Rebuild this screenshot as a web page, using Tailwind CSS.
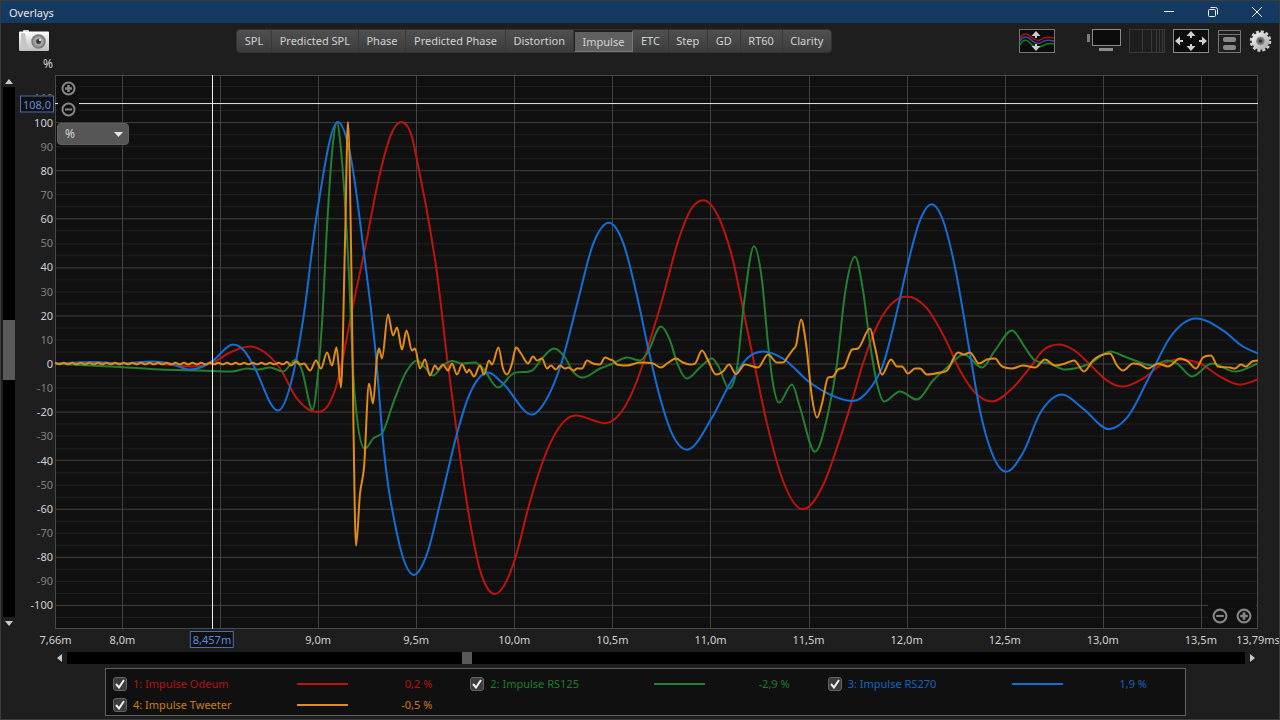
<!DOCTYPE html>
<html lang="en">
<head>
    <meta charset="UTF-8">
    <meta name="viewport" content="width=device-width, initial-scale=1.0">
    <title>Overlays</title>
    <script src="https://cdn.jsdelivr.net/npm/@tailwindcss/browser@4"></script>
</head>
<body class="h-screen flex flex-col overflow-hidden bg-[#1e1e1e] border border-[#3c3c3c] font-['Noto_Sans',sans-serif] text-[11px] leading-4 text-[#d2d2d2]">
    <!-- Title bar -->
    <header class="h-[22px] shrink-0 flex items-center bg-[#153a62] pl-2 pr-4">
        <h1 class="flex-1 pt-px text-[#e6e6e6]">Overlays</h1>
        <div class="flex items-center gap-8">
            <button aria-label="Minimize" class="w-3"><svg class="size-3" viewBox="0 0 12 12" fill="none" stroke="#f0f0f0"><path d="M1 5.5h10"/></svg></button>
            <button aria-label="Restore" class="w-3"><svg class="size-3" viewBox="0 0 12 12" fill="none" stroke="#f0f0f0"><rect x="1.5" y="3.5" width="7" height="7" rx="1"/><path d="M3.5 1.5h5a2 2 0 0 1 2 2v5"/></svg></button>
            <button aria-label="Close" class="w-3"><svg class="size-3" viewBox="0 0 12 12" fill="none" stroke="#f0f0f0"><path d="M1 1l10 10M11 1L1 11"/></svg></button>
        </div>
    </header>

    <!-- Toolbar -->
    <div class="h-[52px] shrink-0 flex items-start pt-[6px] pl-[18px] pr-[7px]">
        <button aria-label="Capture" class="w-[30px] shrink-0">
            <svg class="block w-[30px] h-6" viewBox="0 0 30 24">
                <defs>
                    <linearGradient id="body" x1="0" y1="0" x2="0" y2="1"><stop offset="0" stop-color="#fff"/><stop offset="1" stop-color="#bdbdbd"/></linearGradient>
                    <radialGradient id="lens"><stop offset="0" stop-color="#222"/><stop offset=".3" stop-color="#555"/><stop offset=".45" stop-color="#b5b5b5"/><stop offset=".85" stop-color="#777"/><stop offset="1" stop-color="#a5a5a5"/></radialGradient>
                </defs>
                <rect x="4" y="1" width="6" height="4" rx="1" fill="#d8d8d8"/>
                <rect x="0" y="2.500" width="30" height="19.500" rx="1" fill="url(#body)"/>
                <path d="M2 4h4l3 17H2z" fill="#c6c6c6"/>
                <circle cx="19.500" cy="12.500" r="7.500" fill="url(#lens)"/>
                <circle cx="21" cy="11" r="1" fill="#fff"/>
            </svg>
        </button>
        <nav id="tabs" class="ml-[187px] flex w-[596px] h-6 rounded border border-[#333] bg-linear-to-b from-[#505050] to-[#3c3c3c]"></nav>
        <div class="ml-auto flex items-start">
            <button aria-label="Separate traces" class="mr-8">
                <svg class="block w-9 h-6" viewBox="0 0 36 24" fill="none">
                    <rect x=".5" y=".5" width="35" height="23" fill="#0c0c0c" stroke="#777"/>
                    <g stroke-width="1.500"><path d="M1 9C4 4 8 4 11 7s8 6 12 3 8-2 12-1" stroke="#a01818"/><path d="M1 12C4 7 8 7 11 10s8 6 12 3 8-2 12-1" stroke="#4444b0"/><path d="M1 16c3-6 7-6 10-2s8 5 12 3 8-3 12-2" stroke="#108010"/></g>
                    <path d="M17 4v5M17 20v-5" stroke="#ccc" stroke-width="2"/><path d="M12.500 7L17 2l4.500 5zM12.500 17l4.500 5 4.500-5z" fill="#ccc"/>
                </svg>
            </button>
            <button aria-label="Display" class="mr-2">
                <svg class="block w-[34px] h-6" viewBox="0 0 34 24"><path d="M0 5h3v8H0z" fill="#7c7c7c"/><rect x="5.500" y=".5" width="28" height="16" fill="#0c0c0c" stroke="#8a8a8a"/><path d="M12 19h14v3H12z" fill="#8c8c8c"/></svg>
            </button>
            <button aria-label="Frequency axis" class="mr-2">
                <svg class="block w-9 h-6" viewBox="0 0 36 24" fill="none" stroke="#393939"><rect x=".5" y=".5" width="35" height="23"/><path d="M13.500 0v24M22.500 0v24M27.500 0v24M30.500 0v24M33.500 0v24"/></svg>
            </button>
            <button aria-label="Fit to data" class="mr-[9px]">
                <svg class="block w-9 h-6" viewBox="0 0 36 24"><rect x=".5" y=".5" width="35" height="23" fill="#0c0c0c" stroke="#888"/><g stroke="#d0d0d0" stroke-width="2"><path d="M18 5v4M18 19v-4M4 12h6M32 12h-6"/></g><path d="M13.500 7L18 2l4.500 5zM13.500 17l4.500 5 4.500-5zM7 7.500L2 12l5 4.500zM29 7.500l5 4.500-5 4.500z" fill="#d0d0d0"/></svg>
            </button>
            <button aria-label="Panels" class="mr-2">
                <svg class="block w-[23px] h-6" viewBox="0 0 23 24"><path d="M.5 1.500h22v22H.5zM0 5.500h23" fill="none" stroke="#777"/><rect x="5" y="8" width="13" height="5" rx="2" fill="#888"/><rect x="5" y="16" width="13" height="5" rx="2" fill="#888"/></svg>
            </button>
            <button aria-label="Settings">
                <svg class="block w-[23px] h-6" viewBox="0 0 23 24">
                    <defs><linearGradient id="gear" x1="0" y1="0" x2="1" y2="1"><stop offset="0" stop-color="#fafafa"/><stop offset="1" stop-color="#a0a0a0"/></linearGradient></defs>
                    <circle cx="11.500" cy="12" r="9.500" fill="none" stroke="#d0d0d0" stroke-width="2.500" stroke-dasharray="3 1.974"/>
                    <circle cx="11.500" cy="12" r="8.800" fill="url(#gear)"/>
                    <circle cx="11.500" cy="12" r="4" fill="#707070" stroke="#999"/><circle cx="11.500" cy="12" r="1.800" fill="#333"/>
                </svg>
            </button>
        </div>
    </div>

    <!-- Plot with its vertical scrollbar and scale -->
    <main class="flex-1 min-h-0 flex pl-px pr-[21px]">
        <div class="w-[14px] flex flex-col items-center">
            <button aria-label="Scroll up" class="h-3 flex items-center"><svg class="w-2 h-[5px]" viewBox="0 0 8 5"><path d="M4 0l4 5H0z" fill="#c8c8c8"/></svg></button>
            <div class="flex-1 w-3 bg-black flex flex-col pt-[233px]"><div class="h-[60px] bg-[#595959]"></div></div>
            <button aria-label="Scroll down" class="h-3 flex items-center"><svg class="w-2 h-[5px]" viewBox="0 0 8 5"><path d="M0 0h8L4 5z" fill="#c8c8c8"/></svg></button>
        </div>
        <div id="y-axis" class="relative w-[39px]">
            <span class="absolute right-[2px] -top-[19px] text-[12px]">%</span>
        </div>
        <div class="relative flex-1 bg-[#101010]">
            <svg id="plot" class="absolute inset-0 size-full" viewBox="55 75 1203 553" preserveAspectRatio="none" fill="none"></svg>
            <div class="absolute left-[3px] top-[4px] flex flex-col">
                <button aria-label="Zoom in vertically" class="bg-[#101010] px-[3px] py-[2px]"><svg class="block size-[15px]" viewBox="0 0 15 15" fill="none" stroke="#868686" stroke-width="2"><circle cx="7.500" cy="7.500" r="6"/><path d="M4 7.500h7M7.500 4v7" stroke-width="2.500"/></svg></button>
                <button aria-label="Zoom out vertically" class="bg-[#101010] px-[3px] py-[4px]"><svg class="block size-[15px]" viewBox="0 0 15 15" fill="none" stroke="#868686" stroke-width="2"><circle cx="7.500" cy="7.500" r="6"/><path d="M4 7.500h7"/></svg></button>
            </div>
            <label class="absolute left-[2px] top-12 w-[72px]">
                <select aria-label="Y axis unit" class="block w-full h-[22px] appearance-none rounded bg-[#565656] border border-[#606060] pl-[7px] text-[12px] text-[#d2d2d2]"><option>%</option><option>dBFS</option></select>
                <svg class="absolute right-[6px] top-[9px] w-[9px] h-[5px]" viewBox="0 0 9 5"><path d="M0 0h9L4.500 5z" fill="#e6e6e6"/></svg>
            </label>
            <div class="absolute right-[2px] bottom-[2px] flex bg-[#101010]">
                <button aria-label="Zoom out horizontally" class="px-[4px] py-[3px]"><svg class="block size-4" viewBox="0 0 15 15" fill="none" stroke="#868686" stroke-width="2"><circle cx="7.500" cy="7.500" r="6"/><path d="M4 7.500h7"/></svg></button>
                <button aria-label="Zoom in horizontally" class="px-[4px] py-[3px]"><svg class="block size-4" viewBox="0 0 15 15" fill="none" stroke="#868686" stroke-width="2"><circle cx="7.500" cy="7.500" r="6"/><path d="M4 7.500h7M7.500 4v7" stroke-width="2.500"/></svg></button>
            </div>
        </div>
    </main>

    <div id="x-axis" class="relative h-[23px] shrink-0 ml-[54px] mr-[21px]"></div>

    <!-- Horizontal scrollbar -->
    <div class="h-3 shrink-0 flex items-center ml-14 mr-6">
        <button aria-label="Scroll left" class="w-[10px]"><svg class="w-[5px] h-2" viewBox="0 0 5 8"><path d="M5 0v8L0 4z" fill="#c8c8c8"/></svg></button>
        <div class="flex-1 h-3 bg-black pl-[33%]"><div class="w-[10px] h-3 bg-[#595959]"></div></div>
        <button aria-label="Scroll right" class="w-[10px] flex justify-end"><svg class="w-[5px] h-2" viewBox="0 0 5 8"><path d="M0 0v8l5-4z" fill="#c8c8c8"/></svg></button>
    </div>

    <!-- Legend -->
    <footer id="legend" class="shrink-0 grid grid-cols-3 ml-[104px] mr-[93px] mt-1 mb-[3px] h-12 pl-[7px] pt-[7px] content-start gap-y-[5px] bg-[#101010] border border-[#606060]"></footer>

    <script>
        const tabs = ["SPL", "Predicted SPL", "Phase", "Predicted Phase", "Distortion", "Impulse", "ETC", "Step", "GD", "RT60", "Clarity"];
        const left = 55, top0 = 75, width = 1203, height = 553;
        const zeroY = 363.5, perPercent = 2.41;

        // Traces as x,y pairs in plot units
        const red = "55,363 150,363 193,366 213,362 230,352 250,346 265,352 280,368 297,398 317,411.5 328,405 337,383 343,357 352,310 364,253 380,173 390,137 401,122 412,137 419,170 428,217 437,273 447,357 457,433 467,503 480,569 495,593 508,577 515,558 530,501 547,450 562,423 576,415 605,422.5 620,413 633,390 643,363 650,340 662,300 680,235 691,209 703.5,200 720,220 733,260 743,308 753,357 767,423 783,480 803,508.5 825,480 837,447 852,400 863,363 875,330 890,305 907,296 927,308 947,342 960,370 977,394 992,401 1010,390 1030,367 1043,350 1059,344 1073,349 1090,364 1107,380 1123,386 1143,378 1160,365 1178,359 1200,363 1220,376 1240,384 1258,379";
        const green = "55,363 80,364.5 120,366.5 160,369 200,370 232,371 247,368 258,369 270,367 283,371 296,359 302,370 312.5,409 318,373 322,323 327,227 332,153 337,122 340,140 345,203 350,297 353,370 357,417 365,448 373,438 383,431 393,403 407,370 417,360 425,367 433,375 443,365 452,360.5 462,363 475,362 483,368 498,387 513,373 532,370 542,358 554,348 565,357 573,371 583,377 600,368 613,363 627,357 640,360 647,353 661,326 670,340 677,362 687,378 700,367 712,358 718,365 729,388 737,367 744,303 754,246 762,280 768,343 773,383 779,402 792,384 800,407 815,451 828,413 837,363 845,293 855,256.5 863,290 870,343 877,383 884,401 900,391 917,399 933,380 947,367 964,354 982,367 995,350 1012,330 1025,347 1035,360 1050,363 1065,369 1090,363 1110,351 1127,357 1153,365 1167,360 1177,363 1192,376 1212,363 1235,371 1258,363";
        const blue = "55,363 95,361.5 120,363 152,361 170,363 190,369 203,366 213,360 233,344 244,350 253,364 278,410 294,370 303,320 317,213 338,122 350,153 364,253 377,367 382,430 397,533 414,574 427,553 440,503 457,433 467,400 477,380 488,372 503,383 532,414 548,396 560,367 578,300 593,244 609,222.5 623,242 638,300 648,347 660,397 672,433 687,449 712,417 730,383 747,358 763,351 783,358 810,382 830,394 853,400.5 870,388 882,367 900,298 907,267 920,220 931.5,204 943,220 955,267 970,353 980,410 991,450 1006,471 1023,452 1040,413 1051,399 1062,394 1083,408 1109,428.5 1127,417 1150,375 1170,337 1183,323 1196,318 1223,330 1243,346 1258,353";
        const orange = "287,361.5 291,365 296,361 300,364 304,363 310,370 316,360 321,368 327,352 332,365 336.5,347 341,387 345,243 348,122 351.5,277 353.5,427 356,545 360,493 364,467 369,383 373,403 377,357 379,348 382,358 388,314 393,335 397,327 402,349 406.5,330 412,350 415,348 420,368 425,359 430,375 435,365 438,369 443,364 448,370 452,363 457,374 462,364 467,372 469,369 474,376 480,365 484,374 489,360 492,364 498.5,347 503,368 507,374 512,363 516,347 521,353 528,363 533,356 537,360 542,358 547,368 551,365 556,369 560,365 565,368 568,367 574,370 577,368 582,368 587,360 593,363 600,364 605,357 610,359 613,360 617,364 627,365 640,362 653,363 661,367 667,363 676,358 683,362 690,364 695,363 702,350 708,360 716,374 723,371 729,364 736,373.5 745,364 758,367 768,354 777,362 783,362 788,356 793,349 796,345 801,319 806,343 812,397 817,417 822,403 828,377 833,376 838,369 844,367 852,349 858,348 870,328 875,347 882,374 891,359 897,366 902,366 908,373 915,368 920,368 927,374 940,372 947,370 958,352 964,354 970,352 979,363 987,359 995,358 1001,365 1012,368 1023,365 1035,367 1045,359 1055,365 1065,363 1074,360 1084,371 1093,360 1110,353 1117,365 1123,370 1133,363 1140,364 1148,368 1158,363 1168,366 1180,358 1188,361 1196,368 1203,357 1211,355 1218,366 1230,367 1235,368 1241,364 1246,366 1252,361 1258,360";

        function parse(text) {
            return text.trim().split(" ").map(pair => pair.split(",").map(Number));
        }

        // Pre-impulse ripple of the tweeter
        const ripple = [];
        for (let x = 55, i = 0; x < 285; x += 4.3, i++) {
            ripple.push([x, i % 2 ? 363.8 : 362.2]);
        }

        const traces = [
            { name: "1: Impulse Odeum", value: "0,2 %", stroke: "#be140e", text: "text-[#b4140f]", points: parse(red) },
            { name: "2: Impulse RS125", value: "-2,9 %", stroke: "#23802f", text: "text-[#1e7d2a]", points: parse(green) },
            { name: "3: Impulse RS270", value: "1,9 %", stroke: "#146ed7", text: "text-[#1464be]", points: parse(blue) },
            { name: "4: Impulse Tweeter", value: "-0,5 %", stroke: "#e18c14", text: "text-[#cd7d14]", points: ripple.concat(parse(orange)) },
        ];

        // Monotone cubic through the points, flat at every peak
        function smoothPath(p) {
            const n = p.length;
            const slope = (i) => (p[i + 1][1] - p[i][1]) / (p[i + 1][0] - p[i][0]);
            const m = p.map((_, i) => {
                if (i === 0) return slope(0);
                if (i === n - 1) return slope(n - 2);
                const a = slope(i - 1), b = slope(i);
                if (a * b <= 0) return 0;
                const h0 = p[i][0] - p[i - 1][0], h1 = p[i + 1][0] - p[i][0];
                const avg = (a * h1 + b * h0) / (h0 + h1);
                return Math.sign(a) * Math.min(3 * Math.abs(a), 3 * Math.abs(b), Math.abs(avg));
            });
            let d = `M${p[0][0]} ${p[0][1]}`;
            for (let i = 0; i < n - 1; i++) {
                const dx = (p[i + 1][0] - p[i][0]) / 3;
                d += `C${p[i][0] + dx} ${p[i][1] + m[i] * dx} ${p[i + 1][0] - dx} ${p[i + 1][1] - m[i + 1] * dx} ${p[i + 1][0]} ${p[i + 1][1]}`;
            }
            return d;
        }

        function line(x1, y1, x2, y2, color) {
            return `<path d="M${x1} ${y1}L${x2} ${y2}" stroke="${color}" vector-effect="non-scaling-stroke"/>`;
        }

        function renderPlot() {
            const right = left + width, bottom = top0 + height;
            let html = "";
            for (let v = -105; v <= 115; v += 5) {
                const y = Math.round(zeroY - v * perPercent - 0.5) + 0.5;
                html += line(left, y, right, y, v % 20 === 0 ? "#404040" : "#212121");
            }
            for (let i = 0; i < 12; i++) {
                const x = Math.round(122 + i * 98.08) + 0.5;
                html += line(x, top0, x, bottom, "#424242");
            }
            html += `<rect x="55.5" y="75.5" width="1202" height="552" stroke="#484848"/>`;
            traces.forEach(t => {
                html += `<path d="${smoothPath(t.points)}" stroke="${t.stroke}" stroke-width="2" stroke-linejoin="round" vector-effect="non-scaling-stroke"/>`;
            });
            html += line(left, 103.5, right, 103.5, "#e6e6e6");
            html += line(212.5, top0, 212.5, bottom, "#f0f0f0");
            document.getElementById("plot").innerHTML = html;
        }

        function renderAxes() {
            let html = "";
            for (let v = -100; v <= 110; v += 10) {
                const y = (zeroY - v * perPercent - top0) / height * 100;
                const tone = v % 20 === 0 ? "text-[#d2d2d2]" : "text-[#808080]";
                html += `<span class="absolute right-[2px] -translate-y-1/2 ${tone}" style="top:${y}%">${v}</span>`;
            }
            html += `<span class="absolute right-px -translate-y-1/2 h-[17px] px-[2px] bg-[#101010] border border-[#4a6eb4] text-[#5f8cdc]" style="top:${28.5 / height * 100}%">108,0</span>`;
            document.getElementById("y-axis").insertAdjacentHTML("beforeend", html);

            const labels = [[55.5, "7,66m"], [122.5, "8,0m"]];
            for (let i = 2; i < 12; i++) {
                labels.push([122 + i * 98.08, (8 + i / 2).toFixed(1).replace(".", ",") + "m"]);
            }
            labels.push([1258, "13,79ms"]);
            html = labels.map(([x, label]) =>
                `<span class="absolute top-[3px] -translate-x-1/2" style="left:${(x - left) / width * 100}%">${label}</span>`).join("");
            html += `<span class="absolute top-[2px] -translate-x-1/2 h-[17px] px-[2px] bg-[#101010] border border-[#4a6eb4] text-[#5f8cdc]" style="left:${157 / width * 100}%">8,457m</span>`;
            document.getElementById("x-axis").innerHTML = html;
        }

        function renderTabs() {
            document.getElementById("tabs").innerHTML = tabs.map(name => name === "Impulse"
                ? `<button class="flex-auto px-[6px] whitespace-nowrap bg-[#606060] border border-t-2 border-[#787878] border-t-[#202020] border-l-[#202020]">${name}</button>`
                : `<button class="flex-auto px-[6px] whitespace-nowrap border-r border-[#383838] last:border-r-0">${name}</button>`).join("");
        }

        function renderLegend() {
            document.getElementById("legend").innerHTML = traces.map((t, i) => `
                <div class="flex items-center h-4 pr-[30px] ${t.text}">
                    <label class="relative flex items-center w-[184px]">
                        <input type="checkbox" checked id="trace-${i}" class="peer appearance-none size-[14px] rounded-[3px] bg-[#3c3c3c] border border-[#646464]">
                        <svg class="absolute left-[2px] size-[10px] hidden peer-checked:block" viewBox="0 0 10 10" fill="none" stroke="#f0f0f0" stroke-width="2"><path d="M1 5l3 3.500L9 1"/></svg>
                        <span class="ml-[6px]">${t.name}</span>
                    </label>
                    <svg class="w-[51px] h-[2px]" viewBox="0 0 51 2"><path d="M0 1h51" stroke="${t.stroke}" stroke-width="2"/></svg>
                    <span class="ml-auto mr-2">${t.value}</span>
                </div>`).join("");
        }

        renderTabs();
        renderPlot();
        renderAxes();
        renderLegend();
    </script>
</body>
</html>
